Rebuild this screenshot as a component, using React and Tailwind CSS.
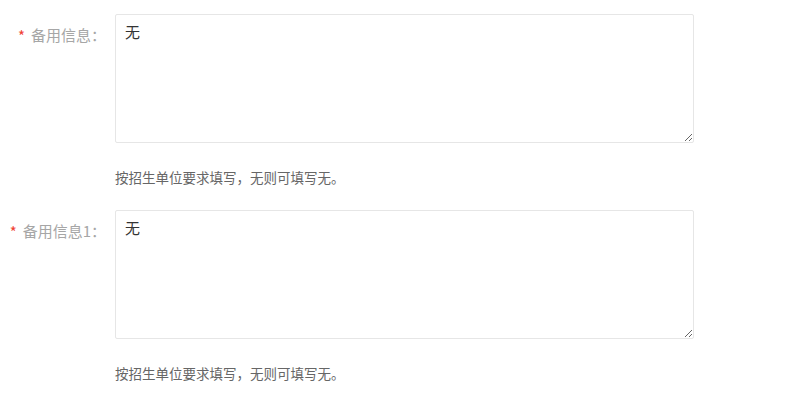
export default function App() {
  const Row = ({ label }) => (
    <div className="flex">
      <div className="w-[115px] shrink-0 flex justify-end items-start pr-[9px] pt-[11px] text-[15px] leading-[20px] text-[#a6a6a6]">
        <span className="text-[#f04134] mr-[6px] text-[15px] leading-[22px]">*</span>
        <span>{label}</span>
      </div>
      <div className="flex flex-col">
        <textarea
          defaultValue="无"
          className="w-[579px] h-[129px] border border-[#e6e6e6] rounded-[2px] px-[9px] py-[7px] text-[15px] leading-[20px] text-[#333] outline-none bg-white"
          style={{ fontFamily: '"Noto Sans CJK SC", sans-serif' }}
        />
        <div className="mt-[24px] text-[13.5px] leading-[20px] text-[#666]">按招生单位要求填写，无则可填写无。</div>
      </div>
    </div>
  );
  return (
    <div className="w-[792px] h-[400px] bg-white pt-[14px] flex flex-col gap-[23px]" style={{ fontFamily: '"Noto Sans CJK SC", sans-serif' }}>
      <Row label="备用信息：" />
      <Row label="备用信息1：" />
    </div>
  );
}
